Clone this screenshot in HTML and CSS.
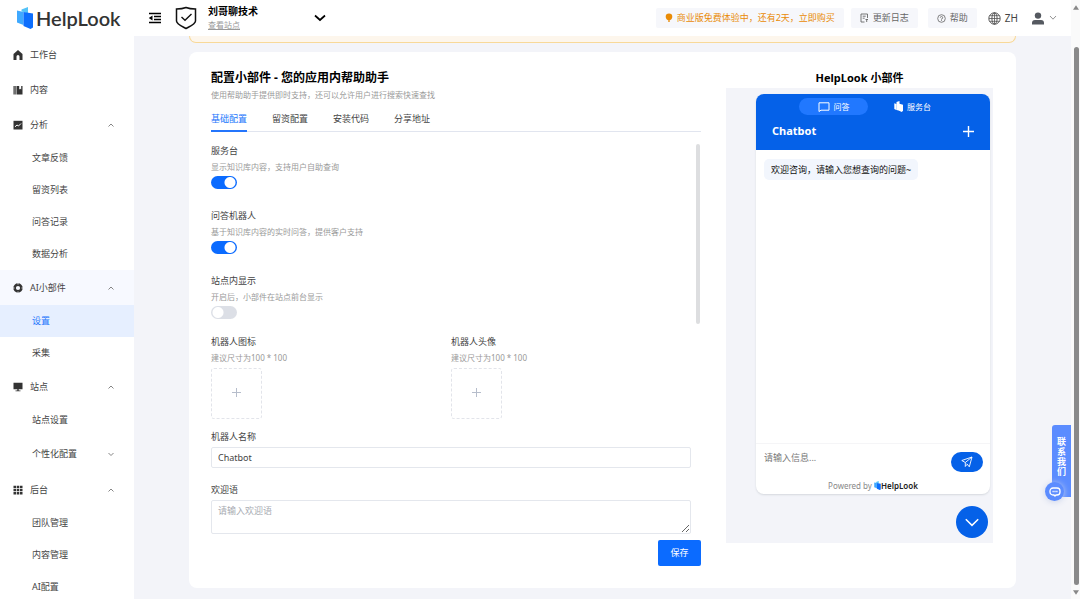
FILE: index.html
```html
<!DOCTYPE html>
<html lang="zh-CN">

<head>
  <meta charset="utf-8" />
  <title>HelpLook - AI小部件设置</title>
  <link rel="stylesheet" href="styles.css">
</head>

<body>
<!-- 公用图标 -->
<svg class="sprite" aria-hidden="true">
  <symbol id="i-mark" viewBox="0 0 16 22">
    <path d="M0 3.500L6.500 5v13L0 15.500z" fill="#3fa9ff" />
    <path d="M4.500 2.500L11 0v6.500L6.500 5 4.500 4.500z" fill="#54c3f8" />
    <path d="M6.500 5l9.500 1.500v14L13.500 22 6.500 19z" fill="#0d6efd" />
  </symbol>
  <symbol id="i-up" viewBox="0 0 8 8">
    <path d="M1.500 5.500L4 3l2.500 2.500" fill="none" stroke="#777" stroke-width=".9" />
  </symbol>
  <symbol id="i-down" viewBox="0 0 8 8">
    <path d="M1.500 3L4 5.500 6.500 3" fill="none" stroke="#777" stroke-width=".9" />
  </symbol>
</svg>

<div class="app">
  <aside class="sidebar">
    <a class="logo" href="#"><svg class="logo-mark"><use href="#i-mark" /></svg><span>HelpLook</span></a>
    <nav class="menu">
      <a class="item" href="#">
        <svg viewBox="0 0 10 10"><path d="M5 0L.5 4v6h3V6.500a1.500 1.500 0 0 1 3 0V10h3V4z" /></svg>
        <span>工作台</span>
      </a>
      <a class="item" href="#">
        <svg viewBox="0 0 10 10"><path d="M.5 1h1.200v8.500H.5zM2.300 1h1.200v8.500H2.300zM4 1h2.200v3.500l1-.8 1 .8V1h1.300v8.500H4z" /></svg>
        <span>内容</span>
      </a>
      <a class="item" href="#">
        <svg viewBox="0 0 10 10"><path d="M.5.800h9v8.700h-9z" /><path d="M2 6.800L4 5l1.500 1L8 3.500" fill="none" stroke="#fff" /></svg>
        <span>分析</span>
        <svg class="arrow"><use href="#i-up" /></svg>
      </a>
      <a class="item sub" href="#">文章反馈</a>
      <a class="item sub" href="#">留资列表</a>
      <a class="item sub" href="#">问答记录</a>
      <a class="item sub" href="#">数据分析</a>
      <a class="item open" href="#">
        <svg viewBox="0 0 10 10"><circle cx="5" cy="5" r="3.400" fill="none" stroke="#333" stroke-width="2.600" /><path d="M5 0v1.500M5 8.500V10M0 5h1.500M8.500 5H10" stroke="#f7f9ff" stroke-width=".8" /></svg>
        <span>AI小部件</span>
        <svg class="arrow"><use href="#i-up" /></svg>
      </a>
      <a class="item sub active" href="#">设置</a>
      <a class="item sub" href="#">采集</a>
      <a class="item" href="#">
        <svg viewBox="0 0 10 10"><path d="M.5.800h9v6.400h-9zM4.300 7.200h1.400V8.500H7.500v.8h-5v-.8h1.800z" /></svg>
        <span>站点</span>
        <svg class="arrow"><use href="#i-up" /></svg>
      </a>
      <a class="item sub" href="#">站点设置</a>
      <a class="item sub tall" href="#"><span>个性化配置</span><svg class="arrow"><use href="#i-down" /></svg></a>
      <a class="item" href="#">
        <svg viewBox="0 0 10 10"><path d="M.5.800h2.500v2.400H.5zM3.700.800h2.600v2.400H3.700zM7 .8h2.500v2.400H7zM.5 3.900h2.500v2.400H.5zM3.700 3.900h2.600v2.400H3.700zM7 3.900h2.500v2.400H7zM.5 7h2.500v2.400H.5zM3.700 7h2.600v2.400H3.700zM7 7h2.500v2.400H7z" /></svg>
        <span>后台</span>
        <svg class="arrow"><use href="#i-up" /></svg>
      </a>
      <a class="item sub" href="#">团队管理</a>
      <a class="item sub" href="#">内容管理</a>
      <a class="item sub" href="#">AI配置</a>
    </nav>
  </aside>

  <div class="page">
    <header class="topbar">
      <button class="icon-btn" aria-label="收起菜单">
        <svg width="14" height="12" viewBox="0 0 14 12"><path d="M1 1.500h12M6 4.500h7M6 7.500h7M1 10.500h12" stroke="#000" stroke-width="1.600" /><path d="M4.500 3.500v5L.8 6z" /></svg>
      </button>
      <svg class="shield" viewBox="0 0 22 24"><path d="M11 1.500c3 1.200 6 1.500 9.500 1.500v12c0 3-5 5-9.500 7.500C6.500 20 1.500 18 1.500 15V3C5 3 8 2.700 11 1.500z" fill="none" stroke="#111" stroke-width="1.500" /><path d="M6.500 11l3.500 3.300L16.500 8" fill="none" stroke="#111" stroke-width="1.400" /></svg>
      <div class="site">
        <strong>刘哥聊技术</strong>
        <a href="#">查看站点</a>
      </div>
      <button class="icon-btn" aria-label="切换站点">
        <svg width="12" height="8" viewBox="0 0 12 8"><path d="M1 1.500l5 4.500 5-4.500" fill="none" stroke="#000" stroke-width="1.700" /></svg>
      </button>
      <div class="tools">
        <button class="chip trial">
          <svg width="8" height="10" viewBox="0 0 8 10"><path d="M4 .5a3.300 3.300 0 0 1 3.300 3.300C7.300 5.500 6 7.300 4 7.500 2 7.300.7 5.500.7 3.800A3.300 3.300 0 0 1 4 .5zM3.300 7.500h1.400l.3 1.200H3z" fill="#e98b06" /></svg>
          商业版免费体验中，还有2天，立即购买
        </button>
        <button class="chip">
          <svg width="9" height="10" viewBox="0 0 9 10"><path d="M7.500 5V1H1v8h3.500M2.700 3.200h3M2.700 5.200h2M5.500 6.500h2.500M6.700 9V6.500" fill="none" stroke="#666" stroke-width=".9" /></svg>
          更新日志
        </button>
        <button class="chip help">
          <svg width="9" height="9" viewBox="0 0 9 9"><circle cx="4.500" cy="4.500" r="3.800" fill="none" stroke="#666" stroke-width=".8" /><path d="M3.300 3.700a1.200 1.200 0 1 1 1.200 1.200v.7M4.500 6.200V7" fill="none" stroke="#666" stroke-width=".8" /></svg>
          帮助
        </button>
        <button class="icon-btn lang">
          <svg width="13" height="13" viewBox="0 0 13 13" fill="none" stroke="#555"><circle cx="6.500" cy="6.500" r="5.700" /><ellipse cx="6.500" cy="6.500" rx="2.600" ry="5.700" /><path d="M6.500.8v11.400M1 6.500h11M1.700 3.700h9.600M1.700 9.300h9.600" stroke-width=".8" /></svg>
          ZH
        </button>
        <button class="icon-btn user" aria-label="账号">
          <svg width="12" height="13" viewBox="0 0 12 13" fill="#555960"><circle cx="6" cy="3.600" r="3.200" /><path d="M0 12.500V11q0-3 3-3h6q3 0 3 3v1.500z" /></svg>
          <svg width="8" height="6" viewBox="0 0 8 6"><path d="M1 1l3 3.200L7 1" fill="none" stroke="#777" stroke-width=".8" /></svg>
        </button>
      </div>
    </header>

    <main class="content">
      <div class="notice"></div>
      <section class="card">
        <div class="config">
          <h1>配置小部件 - 您的应用内帮助助手</h1>
          <p class="tip">使用帮助助手提供即时支持，还可以允许用户进行搜索快速查找</p>
          <nav class="tabs">
            <a class="on" href="#">基础配置</a>
            <a href="#">留资配置</a>
            <a href="#">安装代码</a>
            <a href="#">分享地址</a>
          </nav>
          <div class="scroll">
            <form class="form">
              <div class="field">
                <label for="desk">服务台</label>
                <p class="tip">显示知识库内容，支持用户自助查询</p>
                <input class="switch" id="desk" type="checkbox" checked>
              </div>
              <div class="field">
                <label for="bot">问答机器人</label>
                <p class="tip">基于知识库内容的实时问答，提供客户支持</p>
                <input class="switch" id="bot" type="checkbox" checked>
              </div>
              <div class="field last">
                <label for="show">站点内显示</label>
                <p class="tip">开启后，小部件在站点前台显示</p>
                <input class="switch" id="show" type="checkbox">
              </div>
              <div class="uploads">
                <div>
                  <label for="icon">机器人图标</label>
                  <p class="tip">建议尺寸为100 * 100</p>
                  <button class="upload" id="icon" type="button"><svg viewBox="0 0 9 9"><path d="M4.500 0v9M0 4.500h9" /></svg></button>
                </div>
                <div>
                  <label for="avatar">机器人头像</label>
                  <p class="tip">建议尺寸为100 * 100</p>
                  <button class="upload" id="avatar" type="button"><svg viewBox="0 0 9 9"><path d="M4.500 0v9M0 4.500h9" /></svg></button>
                </div>
              </div>
              <label for="name">机器人名称</label>
              <input class="text" id="name" type="text" value="Chatbot">
              <label for="hello">欢迎语</label>
              <textarea class="text" id="hello" placeholder="请输入欢迎语"></textarea>
            </form>
            <div class="thumb"></div>
          </div>
          <button class="save">保存</button>
        </div>

        <div class="preview">
          <h2>HelpLook 小部件</h2>
          <div class="stage">
            <div class="widget">
              <div class="widget-head">
                <div class="modes">
                  <button class="mode on">
                    <svg width="12" height="10" viewBox="0 0 12 10"><path d="M1 .8h10v7.400H3L1 9.500z" fill="none" stroke="#fff" /></svg>
                    问答
                  </button>
                  <button class="mode">
                    <svg width="9" height="11" viewBox="0 0 9 11"><path d="M.3 2.300l2 .7v6L.3 8zM2.500 1L5.500 0v2.800L9 3.700v6L7.800 11 4.500 9.500l-2-.5z" fill="#fff" /></svg>
                    服务台
                  </button>
                </div>
                <div class="bot-name">
                  <strong>Chatbot</strong>
                  <button class="icon-btn" aria-label="新对话"><svg width="11" height="11" viewBox="0 0 11 11"><path d="M5.500 0v11M0 5.500h11" stroke="#fff" stroke-width="1.400" /></svg></button>
                </div>
              </div>
              <div class="messages"><p>欢迎咨询，请输入您想查询的问题~</p></div>
              <div class="ask">
                <input type="text" placeholder="请输入信息..." aria-label="请输入信息">
                <button class="send" aria-label="发送"><svg width="12" height="12" viewBox="0 0 12 12"><path d="M11 1L.8 4.500l3.500 2L11 1 8.300 10.800 5.800 7.700M4.300 6.500v4l1.800-2.200" fill="none" stroke="#fff" stroke-width=".9" stroke-linejoin="round" /></svg></button>
              </div>
              <div class="powered">Powered by <svg><use href="#i-mark" /></svg><b>HelpLook</b></div>
            </div>
            <button class="fold" aria-label="收起"><svg width="14" height="9" viewBox="0 0 14 9"><path d="M.8 1.200L7 7.400l6.200-6.200" fill="none" stroke="#fff" stroke-width="1.500" /></svg></button>
          </div>
        </div>
      </section>
    </main>
    <a class="contact" href="#">
      联系我们
      <span class="contact-icon"><svg width="12" height="12" viewBox="0 0 12 12" fill="none" stroke="#fff"><path d="M4 2h4a3 3 0 0 1 3 3v1a3 3 0 0 1-3 3H7l-1 1-1-1H4a3 3 0 0 1-3-3V5a3 3 0 0 1 3-3z" stroke-width="1.300" /><path d="M3.500 5.500h5" stroke-width="1.500" stroke-dasharray="1.200 .7" /></svg></span>
    </a>
  </div>

  <div class="scrollbar">
    <svg viewBox="0 0 7 5"><path d="M3.500 0L7 5H0z" /></svg>
    <div class="bar"></div>
    <svg viewBox="0 0 7 5"><path d="M3.500 5L7 0H0z" /></svg>
  </div>
</div>
</body>

</html>
```
FILE: styles.css
```css
* {
  margin: 0;
  padding: 0;
  box-sizing: border-box;
}

body {
  font: 9px/16px "Noto Sans", "Noto Sans CJK SC", sans-serif;
  color: #444;
  background-color: #fff;
}

a {
  color: inherit;
  text-decoration: none;
}

button,
input,
textarea {
  font: inherit;
  color: inherit;
  border: none;
  background: none;
  outline: none;
}

svg {
  flex: none;
}

.sprite {
  position: absolute;
  width: 0;
  height: 0;
}

.app {
  display: flex;
  height: 100vh;
  overflow: hidden;
}

/* 左侧菜单 */
.sidebar {
  width: 134px;
  flex: none;
  overflow: hidden;
}

.logo {
  display: flex;
  align-items: center;
  height: 36px;
  margin-bottom: 1px;
  padding-left: 17px;
  gap: 3px;
  font: 600 20px/36px Lato, sans-serif;
  color: #333;
}

.logo-mark {
  width: 16px;
  height: 22px;
}

.item {
  display: flex;
  align-items: center;
  height: 35px;
  padding: 0 19px 0 13px;
  gap: 7px;
}

.item svg {
  width: 10px;
  height: 10px;
  fill: #333;
}

.item .arrow {
  width: 8px;
  height: 8px;
  margin-left: auto;
}

.sub {
  height: 32px;
  padding-left: 32px;
}

.tall {
  height: 36px;
}

.open {
  background-color: #f7f9ff;
}

.active {
  color: #2475fc;
  background-color: #e6efff;
}

/* 右侧页面 */
.page {
  position: relative;
  flex: 1;
  min-width: 0;
  background-color: #f3f4f9;
}

.topbar {
  display: flex;
  align-items: center;
  height: 36px;
  padding: 0 14px;
  background-color: #fff;
}

.icon-btn {
  display: flex;
  align-items: center;
}

.shield {
  width: 22px;
  height: 24px;
  margin: 0 11px 0 13px;
}

.site {
  width: 106px;
  line-height: 13px;
}

.site strong {
  display: block;
  font-size: 10px;
  color: #000;
}

.site a {
  display: block;
  font-size: 8px;
  color: #999;
  text-decoration: underline;
}

.tools {
  display: flex;
  align-items: center;
  margin-left: auto;
}

.chip {
  display: flex;
  align-items: center;
  height: 20px;
  padding: 0 9px;
  margin-right: 7px;
  gap: 4px;
  border-radius: 2px;
  color: #666;
  background-color: #f6f7fb;
}

.trial {
  color: #e98b06;
}

.help {
  margin: 0 11px 0 3px;
}

.lang {
  gap: 4px;
  font-size: 10px;
}

.user {
  margin-left: 14px;
  gap: 5px;
}

.content {
  padding: 0 55px;
}

.notice {
  height: 7px;
  border: 1px solid #f8d999;
  border-top: none;
  border-radius: 0 0 8px 8px;
  background-color: #fdf6ec;
}

.card {
  display: grid;
  grid-template-columns: 1fr 267px;
  gap: 25px;
  margin-top: 9px;
  padding: 17px 23px 22px 22px;
  border-radius: 8px;
  background-color: #fff;
}

h1,
h2 {
  font-size: 12px;
  line-height: 18px;
  color: #000;
}

.tip {
  font-size: 8px;
  color: #999;
}

.tabs {
  display: flex;
  gap: 25px;
  margin-top: 8px;
  border-bottom: 1px solid #e1e5ef;
}

.tabs a {
  height: 20px;
}

.tabs .on {
  color: #2475fc;
  border-bottom: 1px solid #2475fc;
  box-shadow: 0 1px #2475fc;
}

.scroll {
  display: flex;
  gap: 5px;
  padding-top: 11px;
}

.form {
  flex: 1;
}

.thumb {
  width: 4px;
  height: 180px;
  margin: 1px 1px 0 0;
  border-radius: 2px;
  background-color: #dddee0;
}

label {
  display: block;
}

.field {
  height: 65px;
}

.last {
  height: 61px;
}

.switch {
  display: block;
  appearance: none;
  width: 26px;
  height: 13px;
  margin-top: 1px;
  border-radius: 7px;
  background: radial-gradient(circle at 7px 50%, #fff 5px, #dcdfe6 6px);
}

.switch:checked {
  background: radial-gradient(circle at 19px 50%, #fff 5px, #0b6bff 6px);
}

.uploads {
  display: grid;
  grid-template-columns: 1fr 1fr;
  margin-bottom: 10px;
}

.upload {
  display: block;
  width: 51px;
  height: 51px;
  margin-top: 2px;
  border: 1px dashed #e2e4ea;
  border-radius: 3px;
}

.upload svg {
  width: 9px;
  height: 9px;
  stroke: #b6bdcb;
}

.text {
  display: block;
  width: 100%;
  height: 21px;
  margin: 2px 0 14px;
  padding: 2px 6px;
  border: 1px solid #e4e7ed;
  border-radius: 2px;
}

textarea.text {
  height: 34px;
  margin-bottom: 6px;
}

::placeholder {
  color: #a8abb2;
}

.save {
  display: block;
  width: 43px;
  height: 26px;
  margin-left: auto;
  border-radius: 2px;
  color: #fff;
  background-color: #0b6bff;
}

/* 小部件预览 */
h2 {
  font-size: 11px;
  text-align: center;
}

.stage {
  height: 455px;
  margin-top: 1px;
  padding: 6px 3px 0 30px;
  background-color: #f3f4f9;
}

.widget {
  display: flex;
  flex-direction: column;
  height: 400px;
  border-radius: 8px;
  overflow: hidden;
  background-color: #fff;
  box-shadow: 0 1px 2px #d5d8de;
}

.widget-head {
  height: 56px;
  padding-top: 4px;
  color: #fff;
  background-color: #0561e8;
}

.modes {
  display: flex;
  justify-content: center;
  gap: 10px;
}

.mode {
  display: flex;
  align-items: center;
  justify-content: center;
  width: 69px;
  height: 17px;
  gap: 4px;
  border-radius: 9px;
  font-size: 8px;
}

.mode.on {
  background-color: #2178ff;
}

.bot-name {
  display: flex;
  justify-content: space-between;
  padding: 8px 16px;
  font-size: 11px;
}

.messages {
  flex: 1;
  padding: 9px 8px;
}

.messages p {
  width: max-content;
  padding: 2px 7px;
  line-height: 17px;
  border-radius: 5px;
  color: #111;
  background-color: #f2f6fd;
}

.ask {
  display: flex;
  padding: 8px 7px 0 8px;
  border-top: 1px solid #f5f5f7;
}

.ask input {
  flex: 1;
  min-width: 0;
  height: 12px;
}

.ask ::placeholder {
  color: #777;
}

.send {
  display: flex;
  align-items: center;
  justify-content: center;
  width: 32px;
  height: 20px;
  border-radius: 10px;
  background-color: #0561e8;
}

.powered {
  display: flex;
  align-items: center;
  justify-content: center;
  height: 22px;
  padding-top: 5px;
  font-size: 8px;
  color: #888;
}

.powered svg {
  width: 7px;
  height: 9px;
  margin-left: 2px;
}

.powered b {
  font-weight: 600;
  color: #222;
}

.fold {
  display: flex;
  align-items: center;
  justify-content: center;
  width: 32px;
  height: 32px;
  margin: 12px 2px 0 auto;
  border-radius: 50%;
  background-color: #0561e8;
}

/* 悬浮的联系入口 */
.contact {
  position: absolute;
  right: 0;
  bottom: 102px;
  width: 19px;
  height: 72px;
  padding: 12px 5px 0;
  border-radius: 3px 0 0 0;
  font-weight: bold;
  line-height: 10px;
  color: #fff;
  background-color: #5b8cff;
}

.contact-icon {
  position: absolute;
  left: -7px;
  bottom: -4px;
  display: flex;
  align-items: center;
  justify-content: center;
  width: 19px;
  height: 19px;
  border-radius: 50%;
  background-color: #5b8cff;
  box-shadow: 0 1px 6px #c9d2ea;
}

.scrollbar {
  display: flex;
  flex-direction: column;
  align-items: center;
  width: 9px;
  padding: 5px 1px 4px 2px;
  background-color: #fafafa;
}

.scrollbar svg {
  width: 6px;
  height: 5px;
  fill: #888;
}

.bar {
  flex: 1;
  width: 5px;
  margin: 37px 0 5px;
  border-radius: 3px;
  background-color: #8a8a8a;
}
```
